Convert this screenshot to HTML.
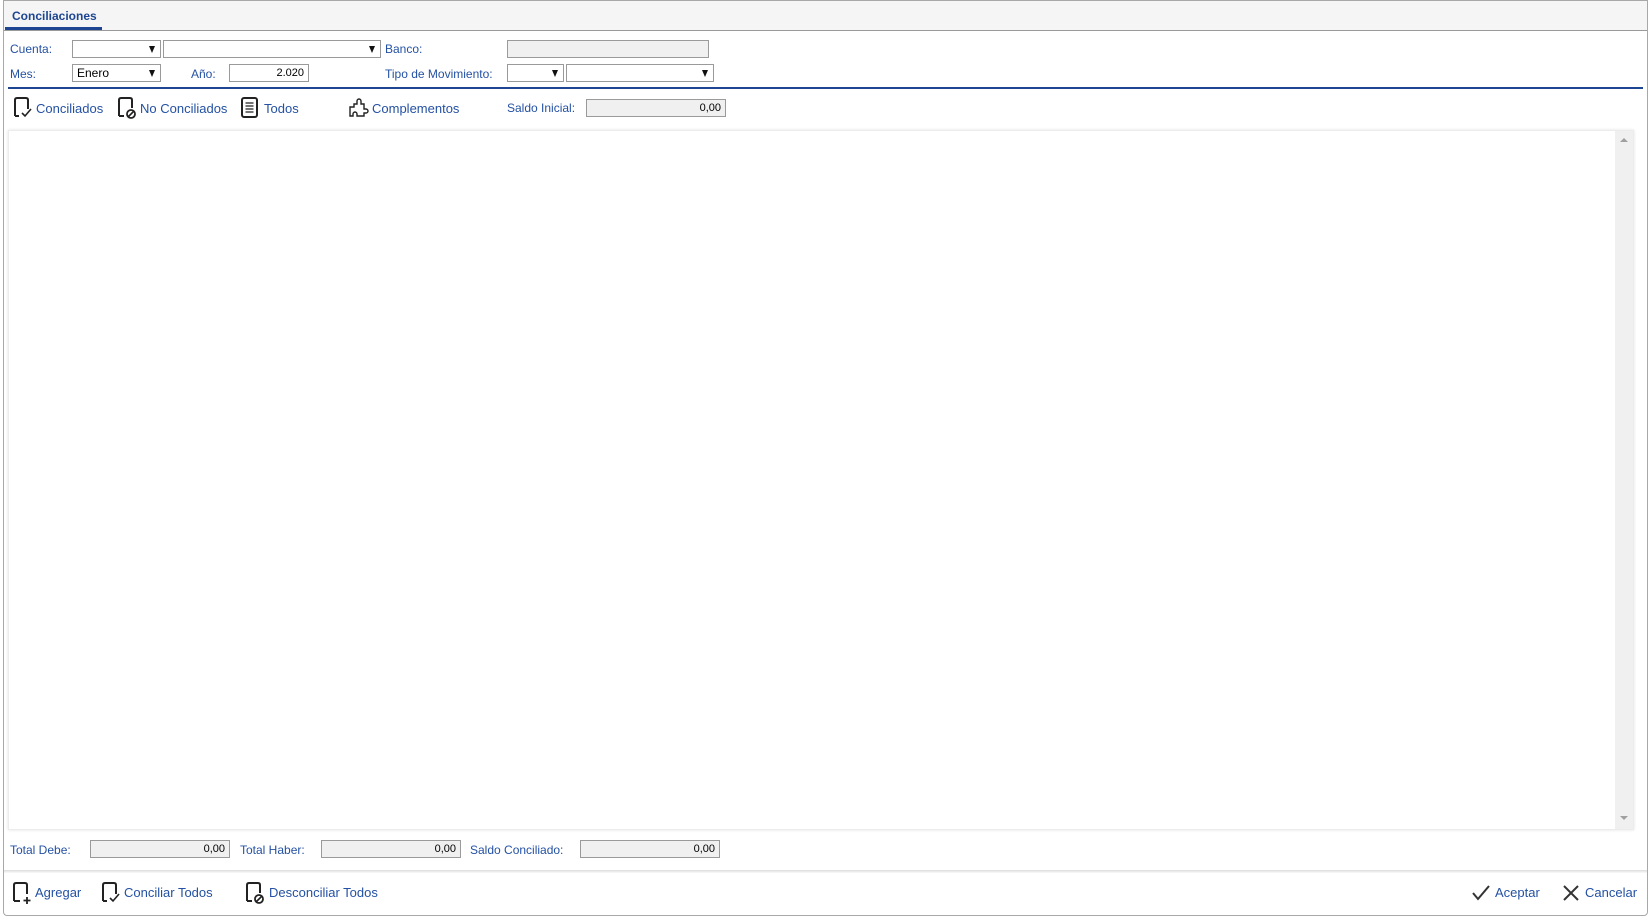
<!DOCTYPE html>
<html><head><meta charset="utf-8"><style>
*{box-sizing:border-box;margin:0;padding:0}
body{width:1649px;height:917px;background:#fff;font-family:"Liberation Sans",Tahoma,sans-serif;font-size:12px;color:#2451a3;position:relative;overflow:hidden}
.a{position:absolute;white-space:nowrap}
.frame{position:absolute;left:3px;top:0;width:1645px;height:916px;border:1px solid #a8a8a8;border-radius:0 0 4px 4px}
.tabbar{position:absolute;left:4px;top:1px;width:1643px;height:30px;background:#f5f5f5;border-bottom:1px solid #9a9a9a}
.in{position:absolute;height:18px;border:1px solid #9a9a9a;background:#fff;font-size:11px;color:#000;text-align:right;padding:2px 4px 0 0}
.g{background:#f0f0f0}
.sel{position:absolute;height:18px;border:1px solid #9a9a9a;background:#fff;font-size:12px;color:#000;padding:1px 0 0 4px}
.sel:after{content:"";position:absolute;right:5px;top:5px;border-left:3.5px solid transparent;border-right:3.5px solid transparent;border-top:7px solid #111}
.lbl{position:absolute;font-size:12px;color:#2451a3}
.btn{position:absolute;font-size:13px;color:#2451a3}
svg{position:absolute}
</style></head><body>
<div class="frame"></div>
<div class="tabbar"></div>
<div class="a" style="left:12px;top:9px;font-weight:bold;font-size:12px;color:#1d4591">Conciliaciones</div>
<div class="a" style="left:5px;top:27px;width:97px;height:3px;background:#1d4591"></div>

<div class="lbl" style="left:10px;top:42px">Cuenta:</div>
<div class="sel" style="left:72px;top:40px;width:89px"></div>
<div class="sel" style="left:163px;top:40px;width:218px"></div>
<div class="lbl" style="left:385px;top:42px">Banco:</div>
<div class="in g" style="left:507px;top:40px;width:202px"></div>

<div class="lbl" style="left:10px;top:67px">Mes:</div>
<div class="sel" style="left:72px;top:64px;width:89px">Enero</div>
<div class="lbl" style="left:191px;top:67px">Año:</div>
<div class="in" style="left:229px;top:64px;width:80px">2.020</div>
<div class="lbl" style="left:385px;top:67px">Tipo de Movimiento:</div>
<div class="sel" style="left:507px;top:64px;width:57px"></div>
<div class="sel" style="left:566px;top:64px;width:148px"></div>

<div class="a" style="left:8px;top:87px;width:1635px;height:2px;background:#1d4591"></div>

<svg style="left:12px;top:97px" width="24" height="22" viewBox="0 0 24 22"><path d="M3 19V3Q3 1 5 1H14Q16 1 16 3V12M7 19H3" fill="none" stroke="#222" stroke-width="2"/><path d="M10 16l3 3 6-7" fill="none" stroke="#222" stroke-width="1.6"/></svg>
<div class="btn" style="left:36px;top:101px">Conciliados</div>
<svg style="left:116px;top:97px" width="24" height="22" viewBox="0 0 24 22"><path d="M3 19V3Q3 1 5 1H14Q16 1 16 3V11M8 19H3" fill="none" stroke="#222" stroke-width="2"/><circle cx="15" cy="17" r="4" fill="none" stroke="#222" stroke-width="1.8"/><path d="M12.5 19.5l5-5" stroke="#222" stroke-width="1.6"/></svg>
<div class="btn" style="left:140px;top:101px">No Conciliados</div>
<svg style="left:240px;top:97px" width="22" height="22" viewBox="0 0 22 22"><rect x="2" y="1" width="15" height="19" rx="2" fill="none" stroke="#222" stroke-width="2"/><path d="M5.5 6h8M5.5 9h8M5.5 12h8M5.5 15h8" stroke="#222" stroke-width="1.3"/></svg>
<div class="btn" style="left:264px;top:101px">Todos</div>
<svg style="left:348px;top:97px" width="22" height="22" viewBox="0 0 22 22"><path d="M2 10h4v-3h3v-3a2 2 0 0 1 4 0v3h3v5h2a2 2 0 0 1 0 4h-2v3H9v-2a2 2 0 0 0-4 0v2H2z" fill="none" stroke="#222" stroke-width="1.4"/></svg>
<div class="btn" style="left:372px;top:101px">Complementos</div>
<div class="lbl" style="left:507px;top:101px">Saldo Inicial:</div>
<div class="in g" style="left:586px;top:99px;width:140px">0,00</div>

<div class="a" style="left:8px;top:130px;width:1626px;height:700px;border:1px solid #ececec;box-shadow:0 0 3px #e2e2e2;background:#fff"></div>
<div class="a" style="left:1615px;top:131px;width:18px;height:698px;background:#f0f0f0"></div>
<div class="a" style="left:1620px;top:138px;border-left:4px solid transparent;border-right:4px solid transparent;border-bottom:4px solid #a0a0a0"></div>
<div class="a" style="left:1620px;top:816px;border-left:4px solid transparent;border-right:4px solid transparent;border-top:4px solid #a0a0a0"></div>

<div class="lbl" style="left:10px;top:843px">Total Debe:</div>
<div class="in g" style="left:90px;top:840px;width:140px">0,00</div>
<div class="lbl" style="left:240px;top:843px">Total Haber:</div>
<div class="in g" style="left:321px;top:840px;width:140px">0,00</div>
<div class="lbl" style="left:470px;top:843px">Saldo Conciliado:</div>
<div class="in g" style="left:580px;top:840px;width:140px">0,00</div>

<div class="a" style="left:4px;top:870px;width:1643px;height:3px;background:linear-gradient(#dcdcdc,#fafafa)"></div>

<svg style="left:11px;top:881px" width="24" height="24" viewBox="0 0 24 24"><path d="M3 20V4Q3 2 5 2H14Q16 2 16 4V13M9 20H3" fill="none" stroke="#222" stroke-width="2"/><path d="M16 16v7M12.5 19.5h7" stroke="#222" stroke-width="1.8"/></svg>
<div class="btn" style="left:35px;top:885px">Agregar</div>
<svg style="left:100px;top:881px" width="24" height="24" viewBox="0 0 24 24"><path d="M3 20V4Q3 2 5 2H14Q16 2 16 4V13M7 20H3" fill="none" stroke="#222" stroke-width="2"/><path d="M10 17l3 3 6-7" fill="none" stroke="#222" stroke-width="1.6"/></svg>
<div class="btn" style="left:124px;top:885px">Conciliar Todos</div>
<svg style="left:244px;top:881px" width="24" height="24" viewBox="0 0 24 24"><path d="M3 20V4Q3 2 5 2H14Q16 2 16 4V12M8 20H3" fill="none" stroke="#222" stroke-width="2"/><circle cx="15" cy="18" r="4" fill="none" stroke="#222" stroke-width="1.8"/><path d="M12.5 20.5l5-5" stroke="#222" stroke-width="1.6"/></svg>
<div class="btn" style="left:269px;top:885px">Desconciliar Todos</div>

<svg style="left:1471px;top:884px" width="20" height="18" viewBox="0 0 20 18"><path d="M2 9l5 6L18 2" fill="none" stroke="#333" stroke-width="2"/></svg>
<div class="btn" style="left:1495px;top:885px">Aceptar</div>
<svg style="left:1562px;top:884px" width="18" height="18" viewBox="0 0 18 18"><path d="M2 2l14 14M16 2L2 16" stroke="#333" stroke-width="2"/></svg>
<div class="btn" style="left:1585px;top:885px">Cancelar</div>
</body></html>
